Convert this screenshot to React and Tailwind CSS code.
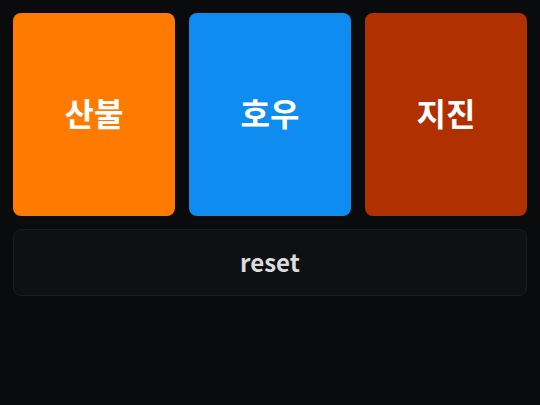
export default function App() {
  const cards = [
    { label: "산불", cls: "bg-[#ff7a00]" },
    { label: "호우", cls: "bg-[#0f8cf0]" },
    { label: "지진", cls: "bg-[#b03000]" },
  ];
  return (
    <div
      className="w-[540px] h-[405px] bg-[#0a0b0d] p-[13px] flex flex-col gap-[13px]"
      style={{ fontFamily: '"Noto Sans CJK KR", "Noto Sans", sans-serif' }}
    >
      <div className="grid grid-cols-3 gap-[14px]">
        {cards.map((c) => (
          <div
            key={c.label}
            className={`${c.cls} h-[203px] rounded-lg flex items-center justify-center text-white text-[32px] font-bold pb-[6px]`}
          >
            {c.label}
          </div>
        ))}
      </div>
      <div className="h-[67px] rounded-lg bg-[#0e1013] border border-[#1a1c20] flex items-center justify-center text-[#dcdcdc] text-2xl font-bold pb-[2px]">
        reset
      </div>
    </div>
  );
}
